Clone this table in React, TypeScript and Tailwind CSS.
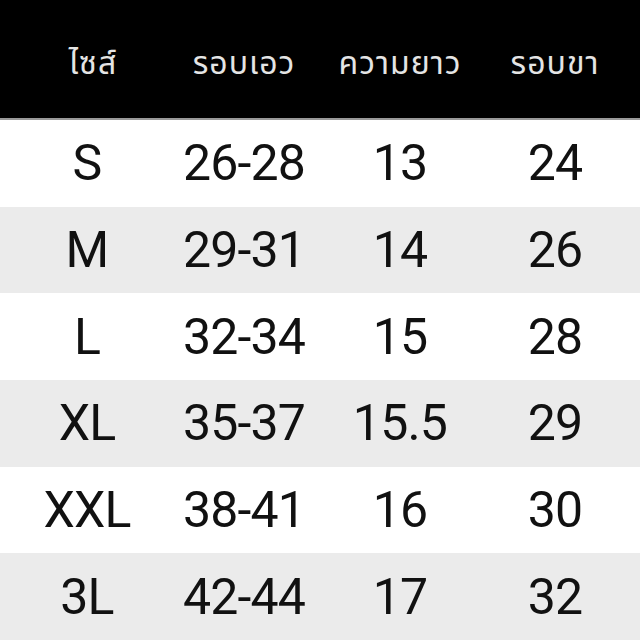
import React from 'react';

const headers = ['ไซส์', 'รอบเอว', 'ความยาว', 'รอบขา'];

const rows = [
  ['S', '26-28', '13', '24'],
  ['M', '29-31', '14', '26'],
  ['L', '32-34', '15', '28'],
  ['XL', '35-37', '15.5', '29'],
  ['XXL', '38-41', '16', '30'],
  ['3L', '42-44', '17', '32'],
];

const cols = 'grid grid-cols-[174px_140px_172px_138px]';

export default function App() {
  return (
    <div className="flex h-[640px] w-[640px] flex-col bg-white font-['Roboto','Noto_Sans_Thai','Noto_Sans',sans-serif]">
      <div className={`${cols} h-[120px] shrink-0 items-center border-b-2 border-[#9a9a9a] bg-black pt-2 text-[32px] tracking-[1px] text-[#e4e4e4]`}>
        {headers.map((h, i) => (
          <div key={h} className={i === 0 ? 'pl-3 text-center' : 'text-center'}>
            {h}
          </div>
        ))}
      </div>
      {rows.map((r, i) => (
        <div
          key={r[0]}
          className={`${cols} flex-1 items-center text-[50px] tracking-[-0.8px] text-[#111] ${i % 2 === 1 ? 'bg-[#ebebeb]' : 'bg-white'}`}
        >
          {r.map((c, j) => (
            <div key={j} className="text-center leading-none">
              {c}
            </div>
          ))}
        </div>
      ))}
    </div>
  );
}
